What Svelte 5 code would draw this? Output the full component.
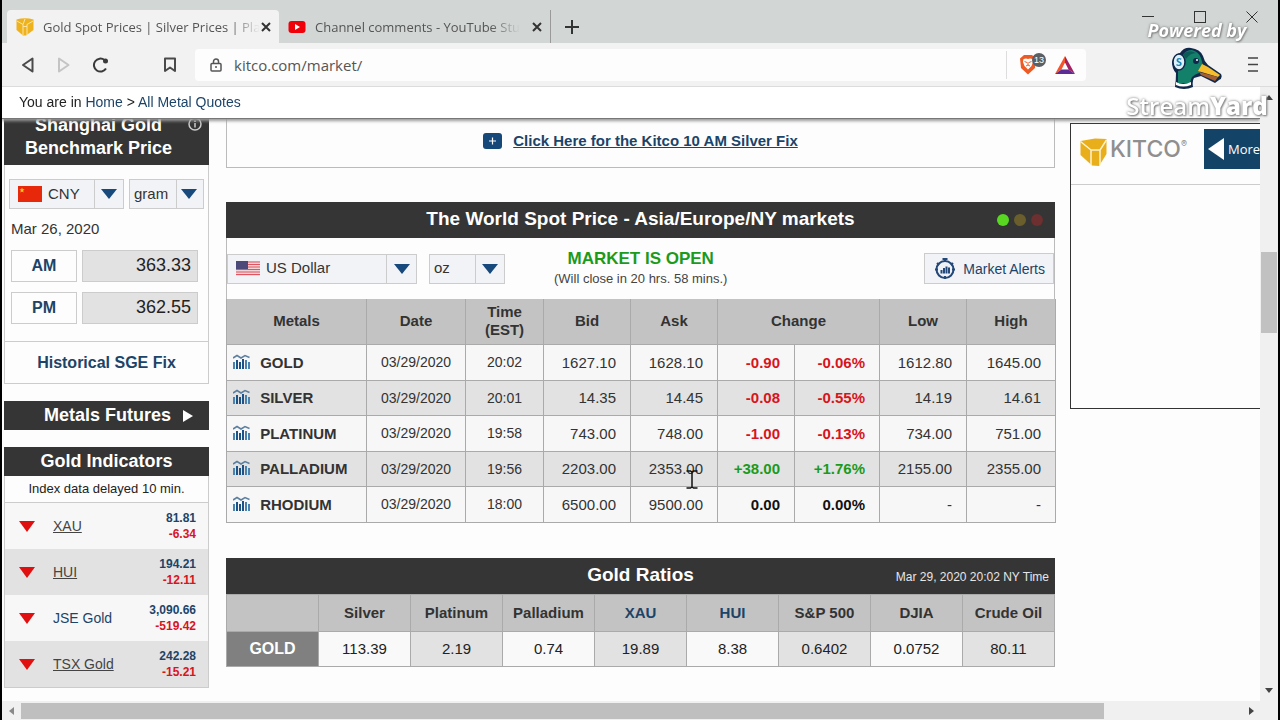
<script lang="ts">
  type Quote = {
    name: string;
    date: string;
    time: string;
    bid: string;
    ask: string;
    change: string;
    percent: string;
    low: string;
    high: string;
  };

  const quotes: Quote[] = [
    { name: 'GOLD', date: '03/29/2020', time: '20:02', bid: '1627.10', ask: '1628.10', change: '-0.90', percent: '-0.06%', low: '1612.80', high: '1645.00' },
    { name: 'SILVER', date: '03/29/2020', time: '20:01', bid: '14.35', ask: '14.45', change: '-0.08', percent: '-0.55%', low: '14.19', high: '14.61' },
    { name: 'PLATINUM', date: '03/29/2020', time: '19:58', bid: '743.00', ask: '748.00', change: '-1.00', percent: '-0.13%', low: '734.00', high: '751.00' },
    { name: 'PALLADIUM', date: '03/29/2020', time: '19:56', bid: '2203.00', ask: '2353.00', change: '+38.00', percent: '+1.76%', low: '2155.00', high: '2355.00' },
    { name: 'RHODIUM', date: '03/29/2020', time: '18:00', bid: '6500.00', ask: '9500.00', change: '0.00', percent: '0.00%', low: '-', high: '-' },
  ];

  const ratios = [
    { name: 'Silver', value: '113.39', link: false },
    { name: 'Platinum', value: '2.19', link: false },
    { name: 'Palladium', value: '0.74', link: false },
    { name: 'XAU', value: '19.89', link: true },
    { name: 'HUI', value: '8.38', link: true },
    { name: 'S&P 500', value: '0.6402', link: false },
    { name: 'DJIA', value: '0.0752', link: false },
    { name: 'Crude Oil', value: '80.11', link: false },
  ];

  const indicators = [
    { name: 'XAU', value: '81.81', change: '-6.34', plain: false },
    { name: 'HUI', value: '194.21', change: '-12.11', plain: false },
    { name: 'JSE Gold', value: '3,090.66', change: '-519.42', plain: true },
    { name: 'TSX Gold', value: '242.28', change: '-15.21', plain: false },
  ];

  let url = $state('kitco.com/market/');
  let sgeCurrency = $state('CNY');
  let sgeUnit = $state('gram');
  let currency = $state('US Dollar');
  let unit = $state('oz');

  function direction(change: string) {
    if (change.startsWith('-')) return 'down';
    if (change.startsWith('+')) return 'up';
    return 'flat';
  }
</script>

<div class="window">
  <header class="tab-strip">
    <div class="tab active">
      <svg class="favicon" width="18" height="18" viewBox="0 0 18 18">
        <path d="M0.500 1.500Q9 -1 17.500 1.500V12L10 17.500L7 17.500L0.500 12Z" fill="#efb21f" />
        <path d="M1 3L7 6.500V17M17 3L11 6.500V17M7 8.500H11M7 6.500L9 1" fill="none" stroke="#fbe6a6" stroke-width="1" />
      </svg>
      <span class="tab-title">Gold Spot Prices | Silver Prices | Pla</span>
      <button class="tab-close" aria-label="Close tab">
        <svg width="10" height="10" viewBox="0 0 10 10"><path d="M1 1L9 9M9 1L1 9" stroke="#333" stroke-width="2" /></svg>
      </button>
    </div>
    <div class="tab">
      <svg class="favicon" width="18" height="18" viewBox="0 0 18 18">
        <rect x="0.500" y="3" width="17" height="12" rx="3" fill="#f00008" />
        <path d="M7 6L12 9L7 12Z" fill="#fff" />
      </svg>
      <span class="tab-title">Channel comments - YouTube Stu</span>
      <button class="tab-close" aria-label="Close tab">
        <svg width="10" height="10" viewBox="0 0 10 10"><path d="M1 1L9 9M9 1L1 9" stroke="#333" stroke-width="2" /></svg>
      </button>
    </div>
    <button class="new-tab" aria-label="New tab">
      <svg width="14" height="14" viewBox="0 0 14 14"><path d="M7 0V14M0 7H14" stroke="#333" stroke-width="2" /></svg>
    </button>
    <div class="window-buttons">
      <button aria-label="Minimize"><svg width="12" height="12" viewBox="0 0 12 12"><path d="M0 5.500H12" stroke="#333" /></svg></button>
      <button aria-label="Maximize"><svg width="12" height="12" viewBox="0 0 12 12"><rect x="0.500" y="0.500" width="11" height="11" fill="none" stroke="#333" /></svg></button>
      <button aria-label="Close window"><svg width="12" height="12" viewBox="0 0 12 12"><path d="M0.500 0.500L11.500 11.500M11.500 0.500L0.500 11.500" stroke="#333" /></svg></button>
    </div>
  </header>

  <nav class="toolbar">
    <button aria-label="Back">
      <svg width="14" height="16" viewBox="0 0 14 16"><path d="M11.500 1.500V14.500L2 8Z" fill="none" stroke="#4a4a4a" stroke-width="2" stroke-linejoin="round" /></svg>
    </button>
    <button aria-label="Forward">
      <svg width="14" height="16" viewBox="0 0 14 16"><path d="M2 1.500V14.500L11.500 8Z" fill="none" stroke="#c4c4c4" stroke-width="2" stroke-linejoin="round" /></svg>
    </button>
    <button aria-label="Reload">
      <svg width="17" height="16" viewBox="0 0 17 16">
        <path d="M14 11.500A6.500 6.500 0 1 1 12.500 3" fill="none" stroke="#3a3a3a" stroke-width="2" />
        <circle cx="13.500" cy="4" r="2.500" fill="#3a3a3a" />
      </svg>
    </button>
    <button class="bookmark" aria-label="Bookmark">
      <svg width="14" height="16" viewBox="0 0 14 16"><path d="M2 1.500H12V14L7 10.500L2 14Z" fill="none" stroke="#4a4a4a" stroke-width="2" stroke-linejoin="round" /></svg>
    </button>
    <div class="address">
      <svg width="12" height="14" viewBox="0 0 12 14">
        <rect x="1" y="5.500" width="10" height="7.500" rx="1" fill="none" stroke="#555" stroke-width="1.500" />
        <path d="M3.500 5.500V3.500A2.500 2.500 0 0 1 8.500 3.500V5.500" fill="none" stroke="#555" stroke-width="1.500" />
        <circle cx="6" cy="9" r="1" fill="#555" />
      </svg>
      <input type="text" aria-label="Address" bind:value={url} />
      <button class="shields" aria-label="Brave Shields, 13 blocked">
        <svg width="18" height="21" viewBox="0 0 18 21">
          <path d="M5 1H13L17 4.500L16 14L9 20.500L2 14L1 4.500Z" fill="#ee5a24" />
          <path d="M4.500 5L7 4.500L9 5L11 4.500L13.500 5L14 8L12.500 12L9 15.500L5.500 12L4 8Z" fill="#fff" />
          <path d="M5.500 7.500L8 8.500M12.500 7.500L10 8.500M9 8V11M7 12L9 11L11 12" fill="none" stroke="#ee5a24" stroke-width="1" />
        </svg>
        <span class="count">13</span>
      </button>
      <button class="rewards" aria-label="Brave Rewards">
        <svg width="20" height="18" viewBox="0 0 20 18">
          <path d="M10 0L0 18L6.500 13.500L10 6.500Z" fill="#f4552b" />
          <path d="M10 0L20 18L13.500 13.500L10 6.500Z" fill="#a3215f" />
          <path d="M0 18H20L13.500 13.500H6.500Z" fill="#5c2b93" />
        </svg>
      </button>
    </div>
    <button class="menu" aria-label="Menu">
      <svg width="10" height="15" viewBox="0 0 10 15"><path d="M0 1H10M0 7.500H10M0 14H10" stroke="#444" stroke-width="1.500" /></svg>
    </button>
  </nav>

  <div class="viewport">
    <div class="page">
      <div class="breadcrumb">
        <span>You are in <a href="#home">Home</a> &gt; <a href="#quotes">All Metal Quotes</a></span>
      </div>

      <div class="columns">
        <aside class="sidebar">
          <section class="panel sge">
            <h2>Shanghai Gold<br />Benchmark Price</h2>
            <svg class="info" width="14" height="14" viewBox="0 0 14 14">
              <circle cx="7" cy="7" r="6" fill="none" stroke="#ccc" stroke-width="1.500" />
              <path d="M7 6V10.500M7 3.500V5" stroke="#ccc" stroke-width="1.500" />
            </svg>
            <div class="panel-body">
              <div class="selects">
                <label class="select cny">
                  <svg class="flag" width="24" height="16" viewBox="0 0 24 16">
                    <rect width="24" height="16" fill="#e8280b" />
                    <path d="M4 1.500L4.700 3.300L6.600 3.400L5.100 4.600L5.600 6.400L4 5.400L2.400 6.400L2.900 4.600L1.400 3.400L3.300 3.300Z" fill="#f9c920" />
                  </svg>
                  <select aria-label="Currency" bind:value={sgeCurrency}>
                    <option>CNY</option>
                    <option>USD</option>
                  </select>
                </label>
                <label class="select gram">
                  <select aria-label="Unit" bind:value={sgeUnit}>
                    <option>gram</option>
                    <option>oz</option>
                  </select>
                </label>
              </div>
              <p class="date">Mar 26, 2020</p>
              <dl class="fixes">
                <dt>AM</dt>
                <dd>363.33</dd>
                <dt>PM</dt>
                <dd>362.55</dd>
              </dl>
            </div>
            <a class="history" href="#sge">Historical SGE Fix</a>
          </section>

          <button class="futures">
            Metals Futures
            <svg width="10" height="12" viewBox="0 0 10 12"><path d="M0 0L10 6L0 12Z" fill="#fff" /></svg>
          </button>

          <section class="panel indicators">
            <h2>Gold Indicators</h2>
            <p class="delay">Index data delayed 10 min.</p>
            <ul>
              {#each indicators as item}
                <li>
                  <svg width="16" height="11" viewBox="0 0 16 11"><path d="M0 0H16L8 11Z" fill="#e01010" /></svg>
                  <a class:plain={item.plain} href="#index">{item.name}</a>
                  <span class="figures">
                    <span>{item.value}</span>
                    <span class="down">{item.change}</span>
                  </span>
                </li>
              {/each}
            </ul>
          </section>
        </aside>

        <main>
          <div class="fix-link">
            <svg width="19" height="16" viewBox="0 0 19 16">
              <rect width="19" height="16" rx="3" fill="#16497a" />
              <path d="M9.500 4.500V11.500M6 8H13" stroke="#fff" stroke-width="1.200" />
            </svg>
            <a href="#fix">Click Here for the Kitco 10 AM Silver Fix</a>
          </div>

          <section class="spot">
            <div class="title-bar">
              <h1>The World Spot Price - Asia/Europe/NY markets</h1>
              <div class="lights">
                <i class="green"></i>
                <i class="amber"></i>
                <i class="red"></i>
              </div>
            </div>

            <div class="controls">
              <label class="select usd">
                <svg class="flag" width="24" height="15" viewBox="0 0 24 15">
                  <rect width="24" height="15" fill="#f3d5d8" />
                  <path d="M0 1H24M0 3.500H24M0 6H24M0 8.500H24M0 11H24M0 13.500H24" stroke="#dc5560" />
                  <rect width="12" height="8" fill="#4b4a78" />
                </svg>
                <select aria-label="Currency" bind:value={currency}>
                  <option>US Dollar</option>
                  <option>Euro</option>
                </select>
              </label>
              <label class="select oz">
                <select aria-label="Weight" bind:value={unit}>
                  <option>oz</option>
                  <option>gram</option>
                </select>
              </label>
              <div class="status">
                <strong>MARKET IS OPEN</strong>
                <span>(Will close in 20 hrs. 58 mins.)</span>
              </div>
              <button class="alerts">
                <svg width="22" height="23" viewBox="0 0 22 23">
                  <circle cx="11" cy="12.500" r="8.500" fill="#eef1f6" stroke="#234878" stroke-width="2" />
                  <path d="M8.500 2H13.500M11 1V5M3 6L5 8M19 6L17 8M1 12.500H4M18 12.500H21M11 19V22" stroke="#234878" stroke-width="2" />
                  <path d="M7.500 16.500V13M10 16.500V11M12.500 16.500V9.500M15 16.500V10.500" stroke="#234878" stroke-width="2" />
                </svg>
                Market Alerts
              </button>
            </div>

            <table class="quotes">
              <colgroup>
                <col class="c-metal" />
                <col class="c-date" />
                <col class="c-time" />
                <col class="c-price" />
                <col class="c-price" />
                <col class="c-change" />
                <col class="c-percent" />
                <col class="c-price" />
                <col class="c-high" />
              </colgroup>
              <thead>
                <tr>
                  <th>Metals</th>
                  <th>Date</th>
                  <th>Time<br />(EST)</th>
                  <th>Bid</th>
                  <th>Ask</th>
                  <th colspan="2">Change</th>
                  <th>Low</th>
                  <th>High</th>
                </tr>
              </thead>
              <tbody>
                {#each quotes as q}
                  <tr>
                    <td class="metal">
                      <svg width="17" height="15" viewBox="0 0 17 15">
                        <path d="M1 8V15M13 6V15M16 8V15" stroke="#4a83b0" stroke-width="2" />
                        <path d="M4 6V15M7 8V15M10 5V15" stroke="#1d5286" stroke-width="2" />
                        <path d="M0 4L4 1.500L8 4L12 1.500L16.500 3.500" fill="none" stroke="#5d7f9f" stroke-width="1.500" />
                      </svg>
                      {q.name}
                    </td>
                    <td class="when">{q.date}</td>
                    <td class="when">{q.time}</td>
                    <td>{q.bid}</td>
                    <td>{q.ask}</td>
                    <td class="move {direction(q.change)}">{q.change}</td>
                    <td class="move {direction(q.percent)}">{q.percent}</td>
                    <td>{q.low}</td>
                    <td>{q.high}</td>
                  </tr>
                {/each}
              </tbody>
            </table>
          </section>

          <section class="ratio-box">
            <div class="title-bar">
              <h2>Gold Ratios</h2>
              <span class="stamp">Mar 29, 2020 20:02 NY Time</span>
            </div>
            <table class="ratios">
              <thead>
                <tr>
                  <td></td>
                  {#each ratios as r}
                    <th>{#if r.link}<a href="#ratio">{r.name}</a>{:else}{r.name}{/if}</th>
                  {/each}
                </tr>
              </thead>
              <tbody>
                <tr>
                  <th>GOLD</th>
                  {#each ratios as r}
                    <td>{r.value}</td>
                  {/each}
                </tr>
              </tbody>
            </table>
          </section>
          <div class="next-box"></div>
        </main>

        <aside class="ad">
          <div class="ad-head">
            <svg width="27" height="29" viewBox="0 0 27 29">
              <path d="M0.500 3L15 0.500L26.500 1V16L19 28L12 27.500L0.500 17Z" fill="#e9ae1c" />
              <path d="M0.500 3.500L11 12V27M26.500 2L20 12V27M11 12H20" fill="none" stroke="#fff4cf" stroke-width="1.500" />
            </svg>
            <span class="brand">KITCO<sup>®</sup></span>
            <button class="more">
              <svg width="16" height="22" viewBox="0 0 16 22"><path d="M16 0V22L0 11Z" fill="#fff" /></svg>
              More
            </button>
          </div>
        </aside>
      </div>
    </div>

    <div class="scroll-y">
      <svg width="8" height="5" viewBox="0 0 8 5"><path d="M0 5L4 0L8 5Z" fill="#444" /></svg>
      <div class="thumb"></div>
      <svg width="8" height="5" viewBox="0 0 8 5"><path d="M0 0L4 5L8 0Z" fill="#444" /></svg>
    </div>
  </div>

  <div class="scroll-x">
    <svg width="5" height="8" viewBox="0 0 5 8"><path d="M5 0L0 4L5 8Z" fill="#888" /></svg>
    <div class="thumb"></div>
    <svg width="5" height="8" viewBox="0 0 5 8"><path d="M0 0L5 4L0 8Z" fill="#444" /></svg>
  </div>

  <svg class="cursor" width="12" height="19" viewBox="0 0 12 19">
    <path d="M0.500 1H4.500L6 2L7.500 1H11.500M6 2V17M0.500 18H4.500L6 17L7.500 18H11.500" fill="none" stroke="#111" stroke-width="1.500" />
  </svg>

  <div class="watermark">
    <span class="powered">Powered by</span>
    <svg width="50" height="42" viewBox="0 0 50 42">
      <path d="M3 40Q4 33 4 26Q0 22 0 15Q2 7 8 6Q12 0 19 1Q28 2 31 9Q32 14 36 18L49 27Q51 31 47 33L43 36L29 29L22 31Q20 34 21 40Q12 44 3 40Z" fill="#10284b" />
      <path d="M11 8Q14 3 20 3Q27 5 29 11Q30 16 32 20L27 26Q19 28 18 36H6V24Q14 18 11 8Z" fill="#138069" />
      <path d="M11 7Q17 2 24 6Q18 6 14 12Z" fill="#0a5b58" />
      <path d="M30 17L36 20L48 28L46 30L26 24Z" fill="#f6bd2d" />
      <path d="M27 25L46 30L43 34L29 28Z" fill="#a56032" />
      <path d="M4 35Q11 39 19 35V38Q11 41 4 38Z" fill="#fff" />
      <ellipse cx="7" cy="15" rx="6" ry="8" fill="#dff1f6" stroke="#10284b" stroke-width="1.500" />
      <circle cx="24" cy="14" r="3" fill="#10284b" />
      <circle cx="25" cy="13" r="1" fill="#fff" />
      <text x="4" y="19" class="duck-s">S</text>
    </svg>
    <span class="name">Stream<b>Yard</b></span>
  </div>
</div>

<style>
  :global(body) {
    margin: 0;
    overflow: hidden;
  }

  :global(*) {
    box-sizing: border-box;
  }

  .window {
    position: relative;
    display: flex;
    flex-direction: column;
    height: 100vh;
    border: solid #000;
    border-width: 0 2px;
    background: #fdfdfd;
    color: #333;
    font-family: "Liberation Sans", Arial, sans-serif;
    font-size: 15px;
    overflow: hidden;
  }

  button {
    display: flex;
    align-items: center;
    justify-content: center;
    padding: 0;
    border: 0;
    background: none;
    color: inherit;
    font: inherit;
  }

  svg {
    flex: none;
  }

  h1, h2, p, ul, dl, dd {
    margin: 0;
    padding: 0;
  }

  a {
    color: #1c4468;
    text-decoration: none;
  }

  /* browser chrome */
  .tab-strip {
    display: flex;
    align-items: flex-end;
    flex: none;
    height: 43px;
    padding-left: 5px;
    background: #d2d7d5;
    font-family: "Open Sans", sans-serif;
  }

  .tab {
    display: flex;
    align-items: center;
    width: 272px;
    height: 33px;
    padding: 0 7px 0 9px;
    border-right: 1px solid transparent;
  }

  .tab.active {
    border-radius: 4px 4px 0 0;
    background: #f2f2f2;
  }

  .tab:not(.active) {
    border-color: #999;
  }

  .tab-title {
    margin: 0 auto 0 9px;
    font-size: 13px;
    line-height: 20px;
    color: #555;
    white-space: nowrap;
    mask-image: linear-gradient(to left, transparent, #000 30px);
  }

  .tab-close {
    width: 12px;
    height: 20px;
  }

  .new-tab {
    width: 42px;
    height: 33px;
  }

  .window-buttons {
    display: flex;
    gap: 40px;
    align-self: flex-start;
    margin-left: auto;
    padding: 11px 20px 0 0;
  }

  .toolbar {
    display: flex;
    align-items: center;
    flex: none;
    height: 44px;
    padding-left: 18px;
    border-bottom: 1px solid #dcdcdc;
    background: #f2f2f2;
  }

  .toolbar > button {
    width: 16px;
    height: 32px;
    margin-right: 20px;
  }

  .toolbar > .bookmark {
    margin: 0 17px 0 34px;
  }

  .address {
    display: flex;
    align-items: center;
    flex: 1;
    height: 32px;
    padding: 0 11px 0 15px;
    border-radius: 4px;
    background: #fdfdfd;
  }

  .address input {
    flex: 1;
    min-width: 0;
    margin-left: 12px;
    padding: 0;
    border: 0;
    outline: 0;
    background: none;
    color: #555;
    font: 15px "Open Sans", sans-serif;
  }

  .shields {
    position: relative;
    width: 49px;
    height: 28px;
    padding-right: 7px;
    border-left: 1px solid #ddd;
  }

  .count {
    position: absolute;
    top: 2px;
    left: 25px;
    width: 14px;
    border-radius: 7px;
    background: #5b5f66;
    color: #fff;
    font-size: 9px;
    line-height: 14px;
  }

  .toolbar > .menu {
    margin: 0 17px 0 159px;
  }

  /* page */
  .viewport {
    display: flex;
    flex: 1;
    min-height: 0;
  }

  .page {
    flex: 1;
    min-width: 0;
    overflow: hidden;
  }

  .breadcrumb {
    position: sticky;
    top: 0;
    z-index: 1;
    height: 32px;
    padding-left: 17px;
    border-bottom: 1px solid #777;
    background: #fff;
    box-shadow: 0 2px 3px #999;
    font-size: 14px;
    line-height: 30px;
    color: #222;
  }

  .columns {
    display: flex;
    align-items: flex-start;
    margin-top: -7px;
    padding-left: 2px;
  }

  .sidebar {
    flex: none;
    width: 205px;
    margin-right: 17px;
  }

  .panel {
    position: relative;
    border: 1px solid #ccc;
    border-top: 0;
  }

  .panel h2,
  .futures {
    margin: 0 -1px;
    background: #353535;
    color: #fff;
    font-size: 18px;
    font-weight: bold;
    text-align: center;
  }

  .sge h2 {
    padding: 2px 16px 5px 0;
    line-height: 23px;
  }

  .info {
    position: absolute;
    top: 5px;
    right: 6px;
  }

  .panel-body {
    padding: 14px 4px 17px;
  }

  .selects {
    display: flex;
    gap: 5px;
  }

  .select {
    position: relative;
    display: flex;
    align-items: center;
    height: 30px;
    border: 1px solid #ccc;
    background: #f1f3f7;
  }

  .select::after {
    content: '';
    position: absolute;
    right: 6px;
    border: solid transparent;
    border-width: 10px 8px 0;
    border-top-color: #17497c;
    pointer-events: none;
  }

  .select::before {
    content: '';
    position: absolute;
    top: 0;
    right: 28px;
    bottom: 0;
    border-left: 1px solid #ccc;
    pointer-events: none;
  }

  .flag {
    position: absolute;
    left: 8px;
    pointer-events: none;
  }

  .select select {
    width: 100%;
    height: 100%;
    padding: 0 28px 2px 4px;
    border: 0;
    appearance: none;
    background: none;
    color: #333;
    font: inherit;
  }

  .select .flag + select {
    padding-left: 38px;
  }

  .cny {
    width: 115px;
  }

  .gram {
    width: 75px;
  }

  .select.gram::before {
    right: 26px;
  }

  .date {
    margin: 11px 2px 12px;
    line-height: 18px;
  }

  .fixes {
    display: grid;
    grid-template-columns: 66px 1fr;
    gap: 10px 5px;
    margin: 0 6px 0 2px;
  }

  .fixes dt,
  .fixes dd {
    height: 32px;
    border: 1px solid #ccc;
    line-height: 30px;
  }

  .fixes dt {
    color: #1c4468;
    font-size: 16px;
    font-weight: bold;
    text-align: center;
  }

  .fixes dd {
    padding-right: 6px;
    background: #e2e2e2;
    color: #222;
    font-size: 18px;
    line-height: 28px;
    text-align: right;
  }

  .history {
    display: block;
    border-top: 1px solid #ccc;
    font-size: 16px;
    font-weight: bold;
    line-height: 41px;
    text-align: center;
  }

  .futures {
    gap: 12px;
    width: 100%;
    height: 29px;
    margin: 17px 0;
    padding-left: 24px;
  }

  .indicators h2 {
    line-height: 29px;
  }

  .delay {
    border-bottom: 1px solid #ccc;
    font-size: 13px;
    line-height: 26px;
    text-align: center;
    color: #222;
  }

  .indicators ul {
    list-style: none;
  }

  .indicators li {
    display: flex;
    align-items: center;
    height: 46px;
    padding: 0 12px 0 14px;
    background: #f7f7f7;
  }

  .indicators li:nth-child(even) {
    background: #e2e2e2;
  }

  .indicators li a {
    margin-left: 18px;
    color: #444;
    font-size: 14px;
    text-decoration: underline;
  }

  .indicators li a.plain {
    color: #1c4468;
    text-decoration: none;
  }

  .figures {
    display: flex;
    flex-direction: column;
    margin-left: auto;
    color: #1c4468;
    font-size: 12px;
    font-weight: bold;
    line-height: 16px;
    text-align: right;
  }

  .down {
    color: #d8141c;
  }

  .up {
    color: #1c9a1c;
  }

  .flat {
    color: #111;
  }

  main {
    flex: 1;
    min-width: 0;
  }

  .fix-link {
    display: flex;
    align-items: center;
    justify-content: center;
    gap: 11px;
    height: 56px;
    padding-top: 2px;
    border: 1px solid #bbb;
    border-top: 0;
  }

  .fix-link a {
    font-weight: bold;
    text-decoration: underline;
  }

  .title-bar {
    position: relative;
    height: 36px;
    background: #353535;
    color: #fff;
    text-align: center;
  }

  .title-bar h1,
  .title-bar h2 {
    font-size: 19px;
    line-height: 34px;
  }

  .spot {
    margin-top: 34px;
  }

  .lights {
    position: absolute;
    top: 12px;
    right: 12px;
    display: flex;
    gap: 5px;
  }

  .lights i {
    width: 12px;
    height: 12px;
    border-radius: 50%;
  }

  .green {
    background: #58d821;
  }

  .amber {
    background: #6a5f2c;
  }

  .red {
    background: #6d2f2f;
  }

  .controls {
    display: flex;
    align-items: center;
    height: 61px;
    border: solid #bbb;
    border-width: 0 1px;
  }

  .usd {
    width: 190px;
    margin-right: 12px;
  }

  .select.usd::before {
    right: 29px;
  }

  .oz {
    width: 76px;
  }

  .status {
    display: flex;
    flex-direction: column;
    margin-left: 49px;
    font-size: 13px;
    line-height: 20px;
    text-align: center;
    color: #444;
  }

  .status strong {
    color: #1c9a1c;
    font-size: 17px;
  }

  .alerts {
    gap: 7px;
    height: 31px;
    margin-left: auto;
    padding: 0 8px 0 9px;
    border: 1px solid #ccc;
    background: #f1f3f7;
    color: #1c4468;
    font-size: 14px;
  }

  table {
    width: 100%;
    border-collapse: collapse;
    table-layout: fixed;
  }

  th,
  td {
    padding: 0;
    border: 1px solid #aaa;
  }

  .c-metal {
    width: 140px;
  }

  .c-date {
    width: 99px;
  }

  .c-time {
    width: 78px;
  }

  .c-price {
    width: 87px;
  }

  .c-change {
    width: 77px;
  }

  .c-percent {
    width: 85px;
  }

  .c-high {
    width: 89px;
  }

  .quotes thead tr {
    height: 45px;
    background: #c3c3c3;
    line-height: 18px;
  }

  .quotes thead th {
    border-top: 0;
  }

  .quotes tbody tr {
    height: 36px;
    background: #f7f7f7;
  }

  .quotes tbody tr:nth-child(even) {
    height: 35px;
    background: #e2e2e2;
  }

  .quotes td {
    padding-right: 14px;
    text-align: right;
  }

  .quotes .metal {
    padding-left: 6px;
    font-weight: bold;
    text-align: left;
  }

  .metal svg {
    margin-right: 6px;
    vertical-align: -1px;
  }

  .quotes .when {
    padding: 0;
    font-size: 14px;
    text-align: center;
  }

  .move {
    font-weight: bold;
  }

  .ratio-box {
    margin-top: 35px;
  }

  .stamp {
    position: absolute;
    top: 0;
    right: 6px;
    color: #e6e6e6;
    font-size: 12px;
    line-height: 38px;
  }

  .ratios tr {
    height: 35px;
    text-align: center;
  }

  .ratios thead tr {
    height: 37px;
    background: #c3c3c3;
  }

  .ratios tbody td {
    background: #e2e2e2;
    color: #222;
  }

  .ratios tbody td:nth-child(even) {
    background: #f9f9f9;
  }

  .ratios tbody th {
    background: #808080;
    color: #fff;
    font-size: 16px;
  }

  .next-box {
    height: 60px;
    margin-top: 34px;
    border: 1px solid #ccc;
  }

  .ad {
    flex: none;
    width: 190px;
    height: 286px;
    margin: 11px 0 0 15px;
    border: 1px solid #333;
    border-right: 0;
  }

  .ad-head {
    display: flex;
    align-items: flex-start;
    height: 61px;
    padding: 5px 0 0 9px;
    border-bottom: 1px solid #ccc;
  }

  .ad-head > svg {
    margin-top: 9px;
  }

  .brand {
    flex: 1;
    margin-left: 3px;
    color: #8f8f8f;
    font: 500 23px/40px Inter, sans-serif;
  }

  .brand sup {
    font-size: 9px;
    vertical-align: 10px;
    line-height: 0;
  }

  .more {
    gap: 4px;
    justify-content: flex-start;
    width: 56px;
    height: 40px;
    padding-left: 4px;
    background: #134468;
    color: #fff;
    font: 13px "Open Sans", sans-serif;
  }

  .scroll-y {
    display: flex;
    flex-direction: column;
    align-items: center;
    justify-content: space-between;
    flex: none;
    width: 18px;
    padding: 8px 0;
    background: #f0f0f0;
  }

  .scroll-y .thumb {
    width: 16px;
    height: 81px;
    margin-bottom: 203px;
    background: #c1c1c1;
  }

  .scroll-x {
    display: flex;
    align-items: center;
    flex: none;
    height: 19px;
    padding: 0 24px 0 7px;
    background: #f0f0f0;
  }

  .scroll-x .thumb {
    width: 87%;
    height: 16px;
    margin: 0 auto 0 7px;
    background: #bfbfbf;
  }

  .cursor {
    position: absolute;
    top: 470px;
    left: 684px;
  }

  .watermark {
    position: absolute;
    top: 18px;
    right: 10px;
    z-index: 2;
    display: flex;
    flex-direction: column;
    align-items: center;
    width: 142px;
    color: #fff;
    font-family: "Open Sans", sans-serif;
    text-shadow: 0 0 3px #777, 1px 1px 2px #888;
    pointer-events: none;
  }

  .powered {
    font-size: 18px;
    font-style: italic;
    font-weight: bold;
    line-height: 24px;
  }

  .watermark svg {
    margin: 5px 0 3px;
  }

  .duck-s {
    font: bold 11px "Open Sans", sans-serif;
    fill: #1c87b8;
    text-shadow: none;
  }

  .name {
    font-size: 24px;
    font-weight: 600;
    line-height: 28px;
  }
</style>
